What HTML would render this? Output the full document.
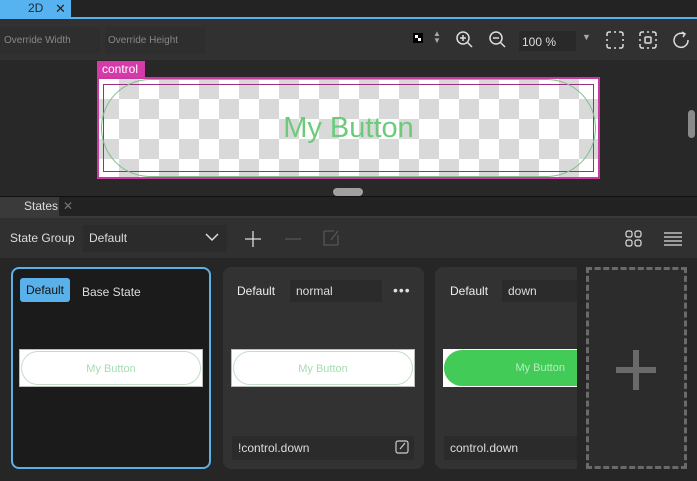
<!DOCTYPE html>
<html><head><style>
*{margin:0;padding:0;box-sizing:border-box}
body{width:697px;height:481px;overflow:hidden;background:#262626;font-family:"Liberation Sans",sans-serif;position:relative;color:#ddd}
.a{position:absolute}
.chk{background-color:#fff;background-image:linear-gradient(45deg,#d9d9d9 25%,transparent 25%,transparent 75%,#d9d9d9 75%),linear-gradient(45deg,#d9d9d9 25%,transparent 25%,transparent 75%,#d9d9d9 75%);background-size:40px 40px;background-position:0 0,20px 20px}
.card{position:absolute;top:267px;height:202px;background:#323232;border-radius:8px}
.fld{position:absolute;background:#2b2b2b;font-size:12px;color:#ddd;line-height:22px;padding-left:6px;white-space:nowrap}
.prev{position:absolute;height:38px;background:#fff;border:1px solid #bbb;overflow:hidden}
.pill{position:absolute;left:1px;right:1px;top:1px;bottom:1px;border:1px solid #c4dcc8;border-radius:18px;text-align:center;font-size:11px;line-height:34px;color:#a6dcb0}
</style></head><body>
<div class="a" style="left:0;top:0;width:697px;height:17px;background:#232323"></div>
<div class="a" style="left:0;top:0;width:71px;height:17px;background:#56b3f0;font-size:12px;color:#1c2a38;line-height:17px;padding-left:28px;white-space:nowrap">2D<span style="position:absolute;left:55px;top:0;font-size:13px;color:#222">✕</span></div>
<div class="a" style="left:0;top:17px;width:697px;height:2px;background:#56b3f0"></div>
<div class="a" style="left:0;top:19px;width:697px;height:41px;background:#313131"></div>
<div class="fld" style="left:0;top:27px;width:100px;height:27px;line-height:27px;font-size:10px;color:#888;background:#2e2e2e;padding-left:4px">Override Width</div>
<div class="fld" style="left:105px;top:27px;width:100px;height:27px;line-height:27px;font-size:10px;color:#888;background:#2e2e2e;padding-left:3px">Override Height</div>
<div class="a" style="left:413px;top:33px;width:10px;height:10px;background:#000;border:2px solid #000"><div style="position:absolute;left:0;top:0;width:3px;height:3px;background:#fff"></div><div style="position:absolute;left:3px;top:3px;width:3px;height:3px;background:#fff"></div></div>
<div class="a" style="left:433px;top:30px;font-size:8px;color:#aaa;line-height:7px">▲<br>▼</div>
<svg class="a" style="left:455px;top:30px" width="20" height="20" fill="none" stroke="#ddd" stroke-width="1.5"><circle cx="8" cy="8" r="6"/><path d="M12.5 12.5L17 17M5 8h6M8 5v6"/></svg>
<svg class="a" style="left:488px;top:30px" width="20" height="20" fill="none" stroke="#ddd" stroke-width="1.5"><circle cx="8" cy="8" r="6"/><path d="M12.5 12.5L17 17M5 8h6"/></svg>
<div class="a" style="left:519px;top:31px;width:57px;height:20px;background:#292929;font-size:12px;color:#ddd;line-height:22px;padding-left:3px">100 %</div>
<div class="a" style="left:582px;top:32px;font-size:9px;color:#aaa">▼</div>
<svg class="a" style="left:606px;top:31px" width="18" height="18" fill="none" stroke="#ddd" stroke-width="1.5"><path d="M1 5V3a2 2 0 0 1 2-2h2M13 1h2a2 2 0 0 1 2 2v2M17 13v2a2 2 0 0 1-2 2h-2M5 17H3a2 2 0 0 1-2-2v-2M8 1h2M8 17h2M1 8v2M17 8v2"/></svg>
<svg class="a" style="left:639px;top:31px" width="18" height="18" fill="none" stroke="#ddd" stroke-width="1.5"><path d="M1 5V3a2 2 0 0 1 2-2h2M13 1h2a2 2 0 0 1 2 2v2M17 13v2a2 2 0 0 1-2 2h-2M5 17H3a2 2 0 0 1-2-2v-2M8 1h2M8 17h2M1 8v2M17 8v2"/><rect x="6" y="6" width="6" height="6" rx="1"/></svg>
<svg class="a" style="left:672px;top:31px" width="18" height="18" fill="none" stroke="#ddd" stroke-width="1.5"><path d="M12 3A7 7 0 1 0 16 9"/><path d="M10 1l3 2-2 3" /></svg>
<div class="a" style="left:0;top:60px;width:697px;height:137px;background:#282828"></div>
<div class="a" style="left:97px;top:61px;width:48px;height:17px;background:#d63aa8;color:#fff;font-size:12px;line-height:17px;padding-left:5px">control</div>
<div class="a" style="left:97px;top:77px;width:503px;height:102px;background:#c93a9e;padding:2px">
 <div class="chk" style="width:499px;height:98px;position:relative">
  <div class="a" style="left:4px;top:5px;right:4px;bottom:5px;border:1px solid #9a2f82"></div>
  <div class="a" style="left:2px;top:0;right:2px;bottom:0;border:1px solid #7cbf89;border-radius:50px;text-align:center;font-size:29px;line-height:96px;color:#6ccb7b">My Button</div>
 </div>
</div>
<div class="a" style="left:688px;top:110px;width:7px;height:28px;background:#8a8a8a;border-radius:4px"></div>
<div class="a" style="left:333px;top:188px;width:30px;height:8px;background:#a0a0a0;border-radius:4px"></div>
<div class="a" style="left:0;top:196px;width:697px;height:1px;background:#111"></div>
<div class="a" style="left:0;top:197px;width:697px;height:19px;background:#222"></div>
<div class="a" style="left:0;top:197px;width:59px;height:19px;background:#3a3a3a;font-size:12px;line-height:19px;padding-left:24px;color:#ddd;white-space:nowrap">States<span style="position:absolute;left:63px;color:#777">✕</span></div>
<div class="a" style="left:0;top:216px;width:697px;height:2px;background:#3a3a3a"></div>
<div class="a" style="left:0;top:218px;width:697px;height:40px;background:#303030"></div>
<div class="a" style="left:10px;top:231px;font-size:12px;color:#ddd">State Group</div>
<div class="a" style="left:83px;top:225px;width:144px;height:27px;background:#2b2b2b;font-size:12px;line-height:27px;padding-left:6px">Default</div>
<svg class="a" style="left:205px;top:232px" width="14" height="10" fill="none" stroke="#ddd" stroke-width="1.5"><path d="M1 2l6 6 6-6"/></svg>
<svg class="a" style="left:244px;top:230px" width="18" height="18" stroke="#ddd" stroke-width="1.3"><path d="M9 1v16M1 9h16"/></svg>
<svg class="a" style="left:284px;top:230px" width="18" height="18" stroke="#555" stroke-width="1.3"><path d="M1 9h16"/></svg>
<svg class="a" style="left:322px;top:229px" width="18" height="18" fill="none" stroke="#555" stroke-width="1.3"><path d="M12 2H3a1 1 0 0 0-1 1v13h13a1 1 0 0 0 1-1V6M16 2L9 11"/></svg>
<svg class="a" style="left:625px;top:230px" width="18" height="18" fill="none" stroke="#ddd" stroke-width="1.2"><rect x="1" y="1" width="6" height="6" rx="2"/><rect x="10" y="1" width="6" height="6" rx="2"/><rect x="1" y="10" width="6" height="6" rx="2"/><rect x="10" y="10" width="6" height="6" rx="2"/></svg>
<svg class="a" style="left:664px;top:231px" width="18" height="16" stroke="#ddd" stroke-width="1.3"><path d="M0 2h18M0 6h18M0 10h18M0 14h18"/></svg>
<div class="card" style="left:11px;width:200px;background:#1b1b1b;border:2px solid #5ab0e8"></div>
<div class="a" style="left:20px;top:278px;width:50px;height:24px;background:#5ab0e8;border-radius:3px;color:#111;font-size:12px;line-height:24px;text-align:center">Default</div>
<div class="a" style="left:82px;top:285px;font-size:12px;color:#ddd">Base State</div>
<div class="prev" style="left:19px;top:349px;width:184px"><div class="pill">My Button</div></div>
<div class="card" style="left:223px;width:201px"></div>
<div class="a" style="left:237px;top:284px;font-size:12px;color:#eee">Default</div>
<div class="fld" style="left:290px;top:280px;width:92px">normal</div>
<div class="a" style="left:393px;top:282px;font-size:14px;color:#ddd;letter-spacing:1px">•••</div>
<div class="prev" style="left:231px;top:349px;width:184px"><div class="pill">My Button</div></div>
<div class="fld" style="left:232px;top:436px;width:182px;height:24px;line-height:24px">!control.down</div>
<svg class="a" style="left:395px;top:440px" width="14" height="14" fill="none" stroke="#ccc" stroke-width="1.2"><rect x="1" y="1" width="12" height="12" rx="2"/><path d="M10 3L5 9"/></svg>
<div class="card" style="left:435px;width:160px"></div>
<div class="a" style="left:450px;top:284px;font-size:12px;color:#eee">Default</div>
<div class="fld" style="left:502px;top:280px;width:80px">down</div>
<div class="prev" style="left:443px;top:349px;width:150px;border-color:#fff"><div class="pill" style="background:#42cb57;border-color:#42cb57;color:#b6eebd;left:0;right:-20px;top:0;bottom:0;border-radius:19px">&nbsp;&nbsp;&nbsp;&nbsp;&nbsp;&nbsp;&nbsp;&nbsp;My Button</div></div>
<div class="fld" style="left:444px;top:436px;width:150px;height:24px;line-height:24px">control.down</div>
<div class="a" style="left:577px;top:258px;width:120px;height:223px;background:#262626"></div>
<div class="a" style="left:586px;top:267px;width:101px;height:202px;border:3px dashed #6a6a6a;background:#2c2c2c"></div>
<div class="a" style="left:616px;top:367px;width:40px;height:6px;background:#6a6a6a"></div>
<div class="a" style="left:633px;top:350px;width:6px;height:40px;background:#6a6a6a"></div>
</body></html>
